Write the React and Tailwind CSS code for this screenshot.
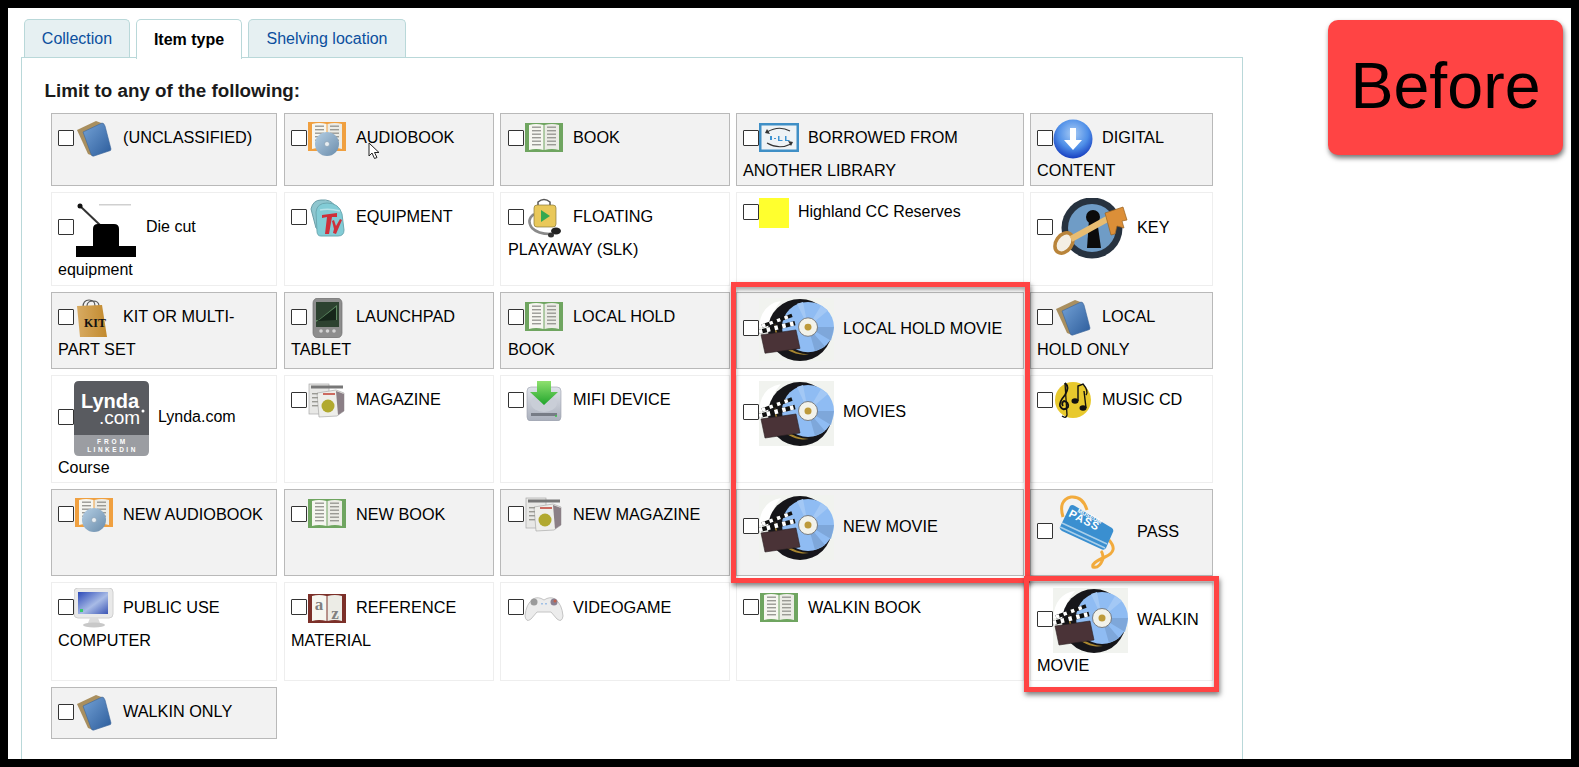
const Svg = ({ w = 40, h = 40, className = "", children }) => (
  <svg width={w} height={h} viewBox={`0 0 ${w} ${h}`} className={"block shrink-0 " + className}>
    {children}
  </svg>
);

const pageLines = (x, ys, len, c = "#9a9a94") =>
  ys.map((y, i) => <rect key={x + "-" + i} x={x} y={y} width={len} height="1.4" fill={c} />);

function OpenBook({ y = 4, frame = "#6fa560", lines = true }) {
  const ys = [3.5, 7, 10.5, 14, 17.5, 21].map((v) => v + y);
  return (
    <>
      <rect x="1" y={y} width="38" height="29" fill={frame} />
      <path d={`M5 ${y + 2} Q12 ${y} 19.5 ${y + 2} V${y + 27} Q12 ${y + 25} 5 ${y + 27}Z`} fill="#f6f6f0" />
      <path d={`M35 ${y + 2} Q28 ${y} 20.5 ${y + 2} V${y + 27} Q28 ${y + 25} 35 ${y + 27}Z`} fill="#ecece6" />
      {lines && pageLines(8, ys, 9)}
      {lines && pageLines(23, ys, 9)}
    </>
  );
}

const GreenBook = ({ y = 4 }) => <Svg><OpenBook y={y} /></Svg>;

const AudioBook = () => (
  <Svg>
    <OpenBook y={3} frame="#f0a040" />
    <defs>
      <linearGradient id="cd" x1="0" y1="0" x2="1" y2="1">
        <stop offset="0" stopColor="#b5cfe4" />
        <stop offset="1" stopColor="#6a8cab" />
      </linearGradient>
    </defs>
    <circle cx="20" cy="25" r="12" fill="url(#cd)" />
    <circle cx="20" cy="25" r="2.500" fill="#e8eef2" stroke="#7f97ab" strokeWidth="0.6" />
  </Svg>
);

const BlueBooks = () => (
  <Svg>
    <defs>
      <linearGradient id="bb" x1="0" y1="0" x2="1" y2="1">
        <stop offset="0" stopColor="#74a2d6" />
        <stop offset="1" stopColor="#2c5c9b" />
      </linearGradient>
    </defs>
    <path d="M3 11 L22 2 L30 5 L19 37 L14 35Z" fill="#a98f5f" />
    <path d="M9 13 L28 4 Q30 4 31 7 L37 30 Q37 32 35 32 L20 37 Q18 38 17 35Z" fill="url(#bb)" stroke="#3b659b" strokeWidth="0.6" />
  </Svg>
);

const Ill = () => (
  <Svg>
    <rect x="0" y="4" width="40" height="29" fill="#3f8fc6" />
    <rect x="2.5" y="6.5" width="35" height="24" fill="#eef3f6" />
    <path d="M8 13 Q20 6 31 12" fill="none" stroke="#333" strokeWidth="1.2" />
    <path d="M8 24 Q20 31 32 25" fill="none" stroke="#333" strokeWidth="1.2" />
    <path d="M8 10 L6 14 L11 15Z M32 27 L34 23 L29 22Z" fill="#333" />
    <path d="M11 17h2v4h-2z M15 19h2v1h-2z M19 17h1.5v4h3v1h-4.500z M26 17h1.500v4h3v1h-4.500z" fill="#3c93d2" />
  </Svg>
);

const Digital = () => (
  <Svg>
    <defs>
      <radialGradient id="dg" cx="0.5" cy="0.35" r="0.7">
        <stop offset="0" stopColor="#a9ccf5" />
        <stop offset="0.55" stopColor="#4f8fe8" />
        <stop offset="1" stopColor="#0d2fb8" />
      </radialGradient>
    </defs>
    <circle cx="20" cy="20" r="19.500" fill="url(#dg)" />
    <path d="M17 9h6v12h6L20 31 11 21h6z" fill="#fff" />
  </Svg>
);

const DieCut = () => (
  <Svg w={63} h={60}>
    <rect x="25" y="6" width="32" height="1.500" fill="#d0d0d0" />
    <line x1="6" y1="8" x2="26" y2="27" stroke="#333" strokeWidth="2" />
    <circle cx="6" cy="8" r="2.500" fill="#111" />
    <path d="M19 31 Q19 26 24 26 H40 Q45 26 45 31 V49 H19Z" fill="#000" />
    <rect x="2" y="48" width="60" height="11" fill="#000" />
  </Svg>
);

const Backpack = () => (
  <Svg>
    <path d="M4 11 Q6 2 14 2 Q24 1 28 8 L22 36 L9 30Z" fill="#8fc6cf" stroke="#6a9ea8" />
    <path d="M9 14 Q10 5 20 5 Q32 5 35 16 L37 32 Q37 38 31 38 H14 Q10 38 10 33Z" fill="#82ccd6" stroke="#6ca9b2" />
    <path d="M13 12 Q22 10 33 13" fill="none" stroke="#b6e2e8" strokeWidth="1.500" />
    <path d="M15 17 L30 15 L30 19 L25 19 L22 36 L18 36 L20 19 L15 20Z" fill="#cf2f3a" />
    <path d="M27 22 L29 28 L33 21 L35 22 L29 36 L26 35 L27 31 L25 23Z" fill="#cf2f3a" />
  </Svg>
);

const Playaway = () => (
  <Svg>
    <path d="M14 8 V4 Q20 -1 26 4 V8" fill="none" stroke="#555" strokeWidth="1.500" />
    <path d="M10 16 Q2 22 8 30 Q14 36 26 36" fill="none" stroke="#8a8a8a" strokeWidth="2.500" />
    <rect x="10" y="7" width="22" height="22" rx="3" fill="#e9c85a" stroke="#8a7a3a" strokeWidth="0.7" />
    <path d="M17 12 L26 18 L17 24Z" fill="#35a850" />
    <ellipse cx="32" cy="33" rx="5" ry="3.500" fill="#222" />
    <ellipse cx="27" cy="37" rx="3" ry="2.500" fill="#333" />
  </Svg>
);

const Key = () => (
  <Svg w={75} h={61}>
    <circle cx="39" cy="30" r="30.500" fill="#27323f" />
    <circle cx="39" cy="30" r="24" fill="#6f9cc6" />
    <circle cx="40" cy="19" r="7" fill="#0b0b0b" />
    <path d="M36 22 H44 L48 50 H34Z" fill="#0b0b0b" />
    <ellipse cx="11" cy="45" rx="8" ry="11" transform="rotate(35 11 45)" fill="#f4efe4" stroke="#b9843a" strokeWidth="3.500" />
    <line x1="18" y1="41" x2="56" y2="20" stroke="#e8bd72" strokeWidth="6" />
    <path d="M52 15 L70 9 L74 22 L69 23 L71 30 L64 28 L62 36 L58 37Z" fill="#dc8f38" stroke="#9a6220" strokeWidth="0.7" />
  </Svg>
);

const KitBag = () => (
  <Svg>
    <defs>
      <linearGradient id="kb" x1="0" y1="0" x2="1" y2="0">
        <stop offset="0" stopColor="#d8ab63" />
        <stop offset="1" stopColor="#c28a2e" />
      </linearGradient>
    </defs>
    <path d="M9 9 Q9 2 15 2 Q21 2 21 8 M13 8 Q13 3 19 3 Q25 3 25 8" fill="none" stroke="#555" strokeWidth="1.200" />
    <path d="M3 8 L28 7 L33 39 H6Z" fill="url(#kb)" />
    <text x="21" y="29" textAnchor="middle" fontFamily="'Liberation Serif',serif" fontWeight="700" fontSize="12" fill="#111">KIT</text>
  </Svg>
);

const Launchpad = () => (
  <Svg>
    <rect x="6" y="0" width="29" height="40" rx="5" fill="#8d8d8d" stroke="#707070" strokeWidth="0.7" />
    <rect x="9" y="4" width="23" height="25" fill="#2d4230" />
    <path d="M9 24 L30 7 V22 H9Z" fill="#5e8a62" />
    <path d="M11 23 L29 9 L29 22Z" fill="#16261a" />
    <circle cx="14" cy="33" r="1.800" fill="#d4d4d4" />
    <circle cx="20.500" cy="33" r="1.800" fill="#d4d4d4" />
    <circle cx="27" cy="33" r="1.800" fill="#d4d4d4" />
  </Svg>
);

const Lynda = () => (
  <Svg w={75} h={75}>
    <path d="M5 0 H70 Q75 0 75 5 V54 H0 V5 Q0 0 5 0Z" fill="#595b60" />
    <path d="M0 54 H75 V70 Q75 75 70 75 H5 Q0 75 0 70Z" fill="#9b9da2" />
    <text x="7" y="27" fontFamily="'Liberation Sans',sans-serif" fontWeight="700" fontSize="20" fill="#fff">Lynda</text>
    <text x="25" y="43" fontFamily="'Liberation Sans',sans-serif" fontSize="19" fill="#fff">.com</text>
    <circle cx="69" cy="30" r="1.500" fill="#fff" />
    <text x="38.500" y="63" textAnchor="middle" fontFamily="'Liberation Sans',sans-serif" fontWeight="700" fontSize="6.500" letterSpacing="3" fill="#fff">FROM</text>
    <text x="38.500" y="71" textAnchor="middle" fontFamily="'Liberation Sans',sans-serif" fontWeight="700" fontSize="6.500" letterSpacing="2.500" fill="#fff">LINKEDIN</text>
  </Svg>
);

const Magazine = () => (
  <Svg>
    <rect x="2" y="3" width="20" height="30" fill="#e8e8e6" stroke="#a9a9a9" strokeWidth="0.7" />
    <rect x="4" y="4.500" width="32" height="3" fill="#777" />
    <path d="M10 12 L29 9 L37 12 L37 30 L30 35 L12 36Z" fill="#eeeeea" stroke="#aaa" strokeWidth="0.7" />
    <path d="M29 10 L37 13 V30 L31 34Z" fill="#8b7f86" />
    <rect x="16" y="12" width="12" height="2" fill="#cc6a60" />
    {pageLines(5, [12, 16, 20, 24], 6)}
    <circle cx="21" cy="25" r="6.500" fill="#b1a92e" />
  </Svg>
);

const Mifi = () => (
  <Svg>
    <defs>
      <linearGradient id="dr" x1="0" y1="0" x2="0" y2="1">
        <stop offset="0" stopColor="#dfe3ea" />
        <stop offset="1" stopColor="#aab0bc" />
      </linearGradient>
      <linearGradient id="ar" x1="0" y1="0" x2="0" y2="1">
        <stop offset="0" stopColor="#8fe06f" />
        <stop offset="1" stopColor="#20a52c" />
      </linearGradient>
    </defs>
    <rect x="3" y="6" width="34" height="34" rx="4" fill="url(#dr)" stroke="#9aa0ac" strokeWidth="0.6" />
    <ellipse cx="20" cy="22" rx="13" ry="9" fill="#c9ced7" />
    <rect x="7" y="32" width="26" height="3" fill="#777c86" />
    <circle cx="32" cy="35" r="1" fill="#3bc24a" />
    <path d="M13 0 H27 V11 H34 L20 24 L6 11 H13Z" fill="url(#ar)" />
  </Svg>
);

function Movie({ h = 65 }) {
  return (
    <svg width="75" height={h} viewBox="0 0 75 65" preserveAspectRatio="none" className="block shrink-0">
      <rect width="75" height="65" fill="#f1f3ef" />
      <path d="M0 30 Q2 6 22 3 Q10 16 12 30Z" fill="#ffffff" />
      <circle cx="41" cy="33" r="32" fill="#16161a" />
      <path d="M16 26 A29 29 0 0 0 50 58 A34 34 0 0 1 16 26Z" fill="#a8862f" />
      <circle cx="49" cy="30" r="26" fill="#8fbcf3" />
      <path d="M49 30 L75 30 L72 44Z M49 30 L66 50 L56 55Z" fill="#7ea7da" />
      <path d="M49 30 L62 8 L69 13Z M49 30 L44 4 L38 6Z" fill="#a3c8f5" />
      <circle cx="49" cy="30" r="9.500" fill="#f2f2ea" stroke="#666" strokeWidth="0.8" />
      <circle cx="49" cy="30" r="3.500" fill="#bd9a3a" />
      <path d="M2 38 L37 33 L41 52 L6 57Z" fill="#4a3337" stroke="#2a2022" strokeWidth="0.6" />
      <path d="M0 35 L36 26" stroke="#111" strokeWidth="4.500" />
      <path d="M0 35 L36 26" stroke="#fff" strokeWidth="4.500" strokeDasharray="3.500 4.500" />
      <path d="M3 29 L33 18" stroke="#111" strokeWidth="3.500" />
      <path d="M3 29 L33 18" stroke="#fff" strokeWidth="3.500" strokeDasharray="3.500 4.500" />
    </svg>
  );
}

const Music = () => (
  <Svg>
    <circle cx="20" cy="19" r="18" fill="#e8c92d" />
    <path d="M12 2 Q17 6 12 14 Q6 21 7 25 Q10 31 15 26 Q16 21 11 20 Q8 22 10 25" fill="none" stroke="#111" strokeWidth="1.800" />
    <path d="M12 2 L14 34 Q13 38 9 35" fill="none" stroke="#111" strokeWidth="1.300" />
    <ellipse cx="22" cy="20" rx="3.500" ry="2.800" fill="#111" />
    <ellipse cx="30" cy="27" rx="3.500" ry="2.800" fill="#111" />
    <path d="M25 20 V5 L30 3 Q36 10 33 14 M33 27 L31 10" fill="none" stroke="#111" strokeWidth="1.400" />
  </Svg>
);

const Pass = () => (
  <Svg w={75} h={75}>
    <path d="M10 22 Q5 5 18 2 Q30 1 34 15" fill="none" stroke="#f2ab3d" strokeWidth="3" />
    <path d="M56 45 Q66 56 52 62 Q38 68 40 72 Q46 74 50 64 Q50 58 48 56" fill="none" stroke="#f2ab3d" strokeWidth="3" />
    <path d="M17 11 Q19 9 22 11 L59 33 Q61 35 60 37 L53 53 Q51 56 48 54 L9 36 Q6 34 7 32Z" fill="#3a8fd0" />
    <path d="M9 28 L54 49 M7 32 L52 53" stroke="#a9cfea" strokeWidth="1.400" />
    <text transform="translate(24 17) rotate(27)" fontFamily="'Liberation Sans',sans-serif" fontWeight="700" fontSize="6" fill="#fff">MUSEUM</text>
    <text transform="translate(15 21) rotate(27)" fontFamily="'Liberation Sans',sans-serif" fontWeight="700" fontSize="11" letterSpacing="1" fill="#fff">PASS</text>
  </Svg>
);

const Computer = () => (
  <Svg>
    <defs>
      <linearGradient id="sc" x1="0" y1="0" x2="1" y2="1">
        <stop offset="0" stopColor="#2c49b8" />
        <stop offset="0.55" stopColor="#a8bbe6" />
        <stop offset="1" stopColor="#3b55b5" />
      </linearGradient>
    </defs>
    <rect x="0" y="0" width="39" height="30" rx="4" fill="#e9e9e9" stroke="#d0d0d0" />
    <rect x="4" y="4" width="30" height="22" fill="url(#sc)" />
    <rect x="6" y="21" width="3" height="3" fill="#37c96d" />
    <path d="M16 30 H24 L26 35 H14Z" fill="#dcdcdc" />
    <ellipse cx="20" cy="37" rx="11" ry="2.500" fill="#c8c8c8" />
  </Svg>
);

const Reference = () => (
  <Svg>
    <OpenBook y={6} frame="#7c3029" lines={false} />
    <text x="12" y="22" textAnchor="middle" fontFamily="'Liberation Serif',serif" fontWeight="700" fontSize="17" fill="#808080">a</text>
    <text x="28" y="31" textAnchor="middle" fontFamily="'Liberation Serif',serif" fontWeight="700" fontSize="17" fill="#808080">z</text>
  </Svg>
);

const Gamepad = () => (
  <Svg>
    <path d="M9 11 Q14 8 20 12 Q26 8 31 11 Q38 16 39 28 Q38 35 33 31 L27 24 H13 L7 31 Q2 35 1 28 Q2 16 9 11Z" fill="#ececec" stroke="#c4c4c4" />
    <circle cx="10" cy="14" r="3.500" fill="#9a9a9a" />
    <circle cx="30" cy="14" r="3.500" fill="#8a7f90" />
    <circle cx="31" cy="13" r="1.500" fill="#c0604a" />
    <rect x="17" y="15" width="2" height="1.500" fill="#9fc0e6" />
    <rect x="21" y="15" width="2" height="1.500" fill="#9fc0e6" />
  </Svg>
);

const Yellow = () => <div className="w-[30px] h-[30px] shrink-0 bg-[#ffff2e]" />;

const Cursor = () => (
  <svg width="13" height="18" viewBox="0 0 13 18" className="absolute left-[83px] top-[28px]">
    <path d="M1 1 V14 L4 11 L6.500 16.500 L9 15.500 L6.500 10.500 H11Z" fill="#fff" stroke="#222" strokeWidth="1" />
  </svg>
);

function Cell({ alt, col3, icon, label, rest, small, over, mixed, low }) {
  const tone = alt ? "bg-[#f2f2f2] border-[#b9b9b9]" : "bg-white border-[#eeeeee]";
  const size = mixed ? "text-[16px]" : "text-[16.25px]";
  const keep = mixed || low;
  return (
    <div className={`relative border pt-[5px] ${col3 ? "pl-[7px]" : "pl-[6px]"} ${tone} ${small ? "mr-px" : ""} ${size}`}>
      <div className="flex items-center">
        <input type="checkbox" className="appearance-none block w-4 h-4 shrink-0 mb-[3px] bg-white border border-[#333333] rounded-[1px]" />
        {icon}
        <span className={`ml-[9px] leading-5 whitespace-nowrap ${keep ? "mb-[3px]" : "mb-[5px]"}`}>{label}</span>
      </div>
      {rest && <div className={`leading-5 whitespace-nowrap ${keep ? "mt-[2px]" : "mt-[1px]"}`}>{rest}</div>}
      {over}
    </div>
  );
}

const tabBase = "h-[38px] pt-px flex items-center justify-center rounded-t-[5px] border border-b-0 border-[#b9d8d9] text-base";

export default function App() {
  return (
    <div className="relative w-[1579px] h-[767px] overflow-hidden border-8 border-black bg-white text-black text-base font-['Liberation_Sans',Arial,sans-serif]">
      <div className="flex h-full pl-[13px] pt-[11px]">
        <div className="w-[1222px] flex flex-col shrink-0">
          <div className="flex gap-[6px] ml-[3px]">
            <div className={`${tabBase} w-[106px] bg-[#e6f0f2] text-[#0b4f9e]`}>Collection</div>
            <div className={`${tabBase} w-[106px] relative z-10 h-[40px] -mb-[2px] bg-white font-bold`}>Item type</div>
            <div className={`${tabBase} w-[158px] bg-[#e6f0f2] text-[#0b4f9e]`}>Shelving location</div>
          </div>
          <div className="flex-1 border border-b-0 border-[#b9d8d9] pl-[22.500px]">
            <div className="mt-[21px] text-[18.800px] leading-6 font-bold text-[#1a1a1a] whitespace-nowrap">Limit to any of the following:</div>
            <div className="mt-[10px] ml-[6.500px] grid grid-cols-[227px_210px_230px_288px_183px] grid-rows-[73px_94px_77px_108px_87px_99px_52px] gap-[6px]">
              <Cell alt small icon={<BlueBooks />} label="(UNCLASSIFIED)" />
              <Cell alt icon={<AudioBook />} label="AUDIOBOOK" over={<Cursor />} />
              <Cell alt col3 icon={<GreenBook />} label="BOOK" />
              <Cell alt icon={<Ill />} label="BORROWED FROM" rest="ANOTHER LIBRARY" />
              <Cell alt icon={<Digital />} label="DIGITAL" rest="CONTENT" />

              <Cell small mixed icon={<DieCut />} label="Die cut" rest="equipment" />
              <Cell icon={<Backpack />} label="EQUIPMENT" />
              <Cell col3 icon={<Playaway />} label="FLOATING" rest="PLAYAWAY (SLK)" />
              <Cell mixed icon={<Yellow />} label="Highland CC Reserves" />
              <Cell low icon={<Key />} label="KEY" />

              <Cell alt small icon={<KitBag />} label="KIT OR MULTI-" rest="PART SET" />
              <Cell alt icon={<Launchpad />} label="LAUNCHPAD" rest="TABLET" />
              <Cell alt col3 icon={<GreenBook />} label="LOCAL HOLD" rest="BOOK" />
              <Cell alt low icon={<Movie h={63} />} label="LOCAL HOLD MOVIE" />
              <Cell alt icon={<BlueBooks />} label="LOCAL" rest="HOLD ONLY" />

              <Cell small mixed icon={<Lynda />} label="Lynda.com" rest="Course" />
              <Cell icon={<Magazine />} label="MAGAZINE" />
              <Cell col3 icon={<Mifi />} label="MIFI DEVICE" />
              <Cell icon={<Movie />} label="MOVIES" />
              <Cell icon={<Music />} label="MUSIC CD" />

              <Cell alt low small icon={<AudioBook />} label="NEW AUDIOBOOK" />
              <Cell alt low icon={<GreenBook />} label="NEW BOOK" />
              <Cell alt low col3 icon={<Magazine />} label="NEW MAGAZINE" />
              <Cell alt low icon={<Movie />} label="NEW MOVIE" />
              <Cell alt low icon={<Pass />} label="PASS" />

              <Cell low small icon={<Computer />} label="PUBLIC USE" rest="COMPUTER" />
              <Cell low icon={<Reference />} label="REFERENCE" rest="MATERIAL" />
              <Cell low col3 icon={<Gamepad />} label="VIDEOGAME" />
              <Cell low icon={<GreenBook y={5} />} label="WALKIN BOOK" />
              <Cell low icon={<Movie />} label="WALKIN" rest="MOVIE" />

              <Cell alt small icon={<BlueBooks />} label="WALKIN ONLY" />
            </div>
          </div>
        </div>
        <div className="ml-[85px] mt-[1px] pb-[3px] w-[235px] h-[135px] shrink-0 flex items-center justify-center rounded-[10px] bg-[#ff4444] shadow-[1px_3px_5px_rgba(0,0,0,0.55)] text-[64.500px] leading-none">
          Before
        </div>
      </div>
      <div className="absolute left-[723px] top-[274px] w-[299px] h-[301px] border-[5px] border-[#ff4444] shadow-[1px_3px_5px_rgba(0,0,0,0.5),inset_0_3px_4px_rgba(0,0,0,0.35)]" />
      <div className="absolute left-[1016px] top-[568px] w-[195px] h-[116px] border-[5px] border-[#ff4444] shadow-[1px_3px_5px_rgba(0,0,0,0.5),inset_0_3px_4px_rgba(0,0,0,0.35)]" />
    </div>
  );
}
